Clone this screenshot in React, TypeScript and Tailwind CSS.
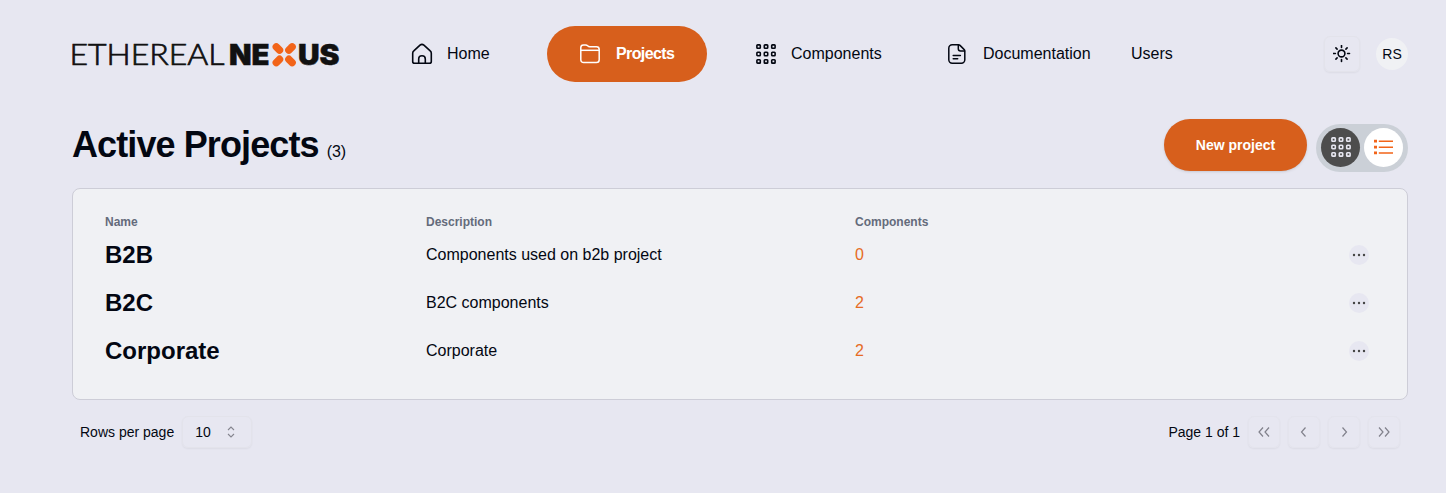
import React from "react";

const HomeIcon = () => (
  <svg className="h-[22px] w-[22px] shrink-0" viewBox="0 0 22 22" fill="none" stroke="currentColor" strokeWidth="1.600" strokeLinejoin="round" strokeLinecap="round">
    <path d="M1.700 10.200c0-.9.400-1.700 1.100-2.300L9 2.200c1.100-1 2.800-1 3.900 0l6.300 5.700c.7.600 1.100 1.400 1.100 2.300v8.200c0 1-.8 1.900-1.900 1.900H3.600c-1.100 0-1.900-.8-1.900-1.900z" />
    <path d="M7.700 20.300v-4.200a3.300 3.300 0 0 1 6.600 0v4.200" />
  </svg>
);

const FolderIcon = () => (
  <svg className="h-5 w-5 shrink-0" viewBox="0 0 20 20" fill="none" stroke="currentColor" strokeWidth="1.500" strokeLinejoin="round">
    <path d="M.8 6.300V3.600C.8 2 2 .9 3.500.9h2.200c.7 0 1.400.3 1.900.8.700.7 1.300 1 2.200 1h6.700c1.500 0 2.700 1.200 2.700 2.700v10.400c0 1.600-1.200 2.800-2.700 2.800h-13C2 18.600.8 17.400.8 15.800z" />
    <path d="M.8 6.300h18.400" />
  </svg>
);

const cells = [0, 1, 2, 3, 4, 5, 6, 7, 8];

const GridIcon = ({ className }: { className: string }) => (
  <svg className={className} viewBox="0 0 20 20" fill="none" stroke="currentColor" strokeWidth="1.600">
    {cells.map((n) => (
      <rect key={n} x={0.9 + (n % 3) * 7.4} y={0.9 + Math.floor(n / 3) * 7.4} width="3.400" height="3.400" rx="0.700" />
    ))}
  </svg>
);

const DocIcon = () => (
  <svg className="h-5 w-[18px] shrink-0" viewBox="0 0 18 20" fill="none" stroke="currentColor" strokeWidth="1.500" strokeLinejoin="round" strokeLinecap="round">
    <path d="M4.200.8h6.300c.6 0 1.100.2 1.500.6l4 4c.5.400.8 1 .8 1.700v8.700a3.400 3.400 0 0 1-3.400 3.400H4.200A3.400 3.400 0 0 1 .8 15.800V4.200A3.400 3.400 0 0 1 4.200.8z" />
    <path d="M10.300 1v3.800c0 1.200 1 2.200 2.200 2.200h4M5.200 11.500h7.200M5.200 14.800h4.500" />
  </svg>
);

const SunIcon = () => (
  <svg className="h-[18px] w-[18px]" viewBox="0 0 18 18" fill="none" stroke="currentColor" strokeWidth="1.600" strokeLinecap="round">
    <circle cx="8.500" cy="8.500" r="3.400" />
    <path d="M8.500 .5v1.900M8.500 14.600v1.900M.5 8.500h1.900M14.600 8.500h1.900M2.900 2.900l1.200 1.200M12.900 12.900l1.200 1.200M14.100 2.900l-1.200 1.200M4.100 12.900l-1.200 1.200" />
  </svg>
);

const ListIcon = () => (
  <svg className="h-4 w-5" viewBox="0 0 20 16" fill="none" stroke="currentColor" strokeWidth="1.500">
    <path d="M4.800 2.200h14.200M4.800 8.200h14.200M4.800 13.900h14.200" />
    <path d="M0 2.200h3M0 8.200h3M0 13.900h3" strokeWidth="2.800" />
  </svg>
);

const Logo = () => (
  <svg className="h-10 w-[272px] shrink-0 overflow-visible" viewBox="0 0 272 40" fill="#111111">
    <text x="-2.500" y="30.500" fontFamily="Lato, sans-serif" fontWeight="300" fontSize="28.500" stroke="#111111" strokeWidth="0.700" textLength="155" lengthAdjust="spacingAndGlyphs">ETHEREAL</text>
    <text x="157" y="30.500" fontFamily="Inter, sans-serif" fontWeight="900" fontSize="28" stroke="#111111" strokeWidth="0.500" textLength="40.500" lengthAdjust="spacingAndGlyphs">NE</text>
    <g fill="#f26419">
      <rect x="-6" y="-3.700" width="12" height="7.400" rx="3.700" transform="translate(205.900 14.500) rotate(45)" />
      <rect x="-6" y="-3.700" width="12" height="7.400" rx="3.700" transform="translate(218.500 14.500) rotate(-45)" />
      <rect x="-6" y="-3.700" width="12" height="7.400" rx="3.700" transform="translate(205.900 26.900) rotate(-45)" />
      <rect x="-6" y="-3.700" width="12" height="7.400" rx="3.700" transform="translate(218.500 26.900) rotate(45)" />
    </g>
    <text x="226" y="30.500" fontFamily="Inter, sans-serif" fontWeight="900" fontSize="28" stroke="#111111" strokeWidth="0.500" textLength="41.500" lengthAdjust="spacingAndGlyphs">US</text>
  </svg>
);

const pagers = ["M7 3.500L3 8L7 12.500M13 3.500L9 8L13 12.500", "M9.500 3.500L5.500 8L9.500 12.500", "M6.500 3.500L10.500 8L6.500 12.500", "M3 3.500L7 8L3 12.500M9 3.500L13 8L9 12.500"];

const projects = [
  { name: "B2B", description: "Components used on b2b project", count: 0 },
  { name: "B2C", description: "B2C components", count: 2 },
  { name: "Corporate", description: "Corporate", count: 2 },
];

export default function App() {
  return (
    <div className="h-[493px] w-[1446px] overflow-hidden bg-[#e7e7f1] pl-[72px] pr-[38px] font-['Liberation_Sans',Arial,sans-serif] text-base text-[#030712]">
      <header className="flex h-[108px] items-center">
        <Logo />
        <nav className="ml-[67px] flex items-center">
          <a className="flex w-[136px] items-center gap-[14px]"><HomeIcon />Home</a>
          <a className="flex h-14 w-40 items-center gap-4 rounded-full bg-[#d75f1c] pl-[33px] font-bold tracking-[-0.600px] text-white"><FolderIcon />Projects</a>
          <a className="ml-[49px] flex w-[192px] items-center gap-[15px]"><GridIcon className="h-5 w-5 shrink-0" />Components</a>
          <a className="flex w-[183px] items-center gap-[17px]"><DocIcon />Documentation</a>
          <a>Users</a>
        </nav>
        <button className="ml-auto flex h-9 w-9 items-center justify-center rounded-md border border-[#e3e3eb] shadow-xs"><SunIcon /></button>
        <span className="ml-4 flex h-8 w-8 items-center justify-center rounded-full bg-[#f0f1f4] text-sm">RS</span>
      </header>
      <main>
        <div className="flex h-20 items-start">
          <h1 className="mt-[17px] text-4xl font-bold tracking-[-0.900px]">Active Projects</h1>
          <span className="ml-2 mt-8">(3)</span>
          <button className="ml-auto mt-[11px] h-[52px] w-[143px] rounded-full bg-[#d75f1c] text-sm font-bold text-white shadow-sm">New project</button>
          <div className="ml-[9px] mt-4 flex h-12 w-[92px] items-center gap-1 rounded-full bg-[#cbd0d7] pb-0.5 pl-[5px]">
            <span className="flex h-[39px] w-[39px] items-center justify-center rounded-full bg-[#4d4d4d] text-[#e7e7f1]"><GridIcon className="h-5 w-5" /></span>
            <span className="flex h-[39px] w-[39px] items-center justify-center rounded-full bg-white text-[#f26419]"><ListIcon /></span>
          </div>
        </div>
        <section className="h-[212px] rounded-lg border border-[#cdcdd7] bg-[#f0f1f4] px-8 pt-6">
          <div className="grid h-[18px] grid-cols-[321px_429px_1fr] items-center text-xs font-bold text-[#646b7b]">
            <span>Name</span><span>Description</span><span>Components</span>
          </div>
          {projects.map((p) => (
            <div key={p.name} className="grid h-12 grid-cols-[321px_429px_1fr_40px] items-center">
              <span className="text-2xl font-bold">{p.name}</span>
              <span>{p.description}</span>
              <span className="text-[#e66b23]">{p.count}</span>
              <button className="ml-[14px] flex h-5 w-5 items-center justify-center rounded-full bg-[#e7e7f1]">
                <svg className="h-4 w-4" viewBox="0 0 16 16" fill="#444"><circle cx="3" cy="8" r="1.200" /><circle cx="8" cy="8" r="1.200" /><circle cx="13" cy="8" r="1.200" /></svg>
              </button>
            </div>
          ))}
        </section>
        <footer className="mt-4 flex h-8 items-center px-2 text-sm">
          <span>Rows per page</span>
          <button className="ml-2 flex h-8 w-[70px] items-center justify-between rounded-md border border-[#e3e3eb] pl-3 pr-3 shadow-xs">
            10
            <svg className="h-4 w-4" viewBox="0 0 16 16" fill="none" stroke="#85858f" strokeWidth="1.100"><path d="M5 6L8 3L11 6M5 10L8 13L11 10" /></svg>
          </button>
          <span className="ml-auto mr-2">Page 1 of 1</span>
          <div className="flex gap-2">
            {pagers.map((d) => (
              <button key={d} className="flex h-8 w-8 items-center justify-center rounded-md border border-[#e4e4ed] text-[#81818b] shadow-xs">
                <svg className="h-4 w-4" viewBox="0 0 16 16" fill="none" stroke="currentColor" strokeWidth="1.200"><path d={d} /></svg>
              </button>
            ))}
          </div>
        </footer>
      </main>
    </div>
  );
}
